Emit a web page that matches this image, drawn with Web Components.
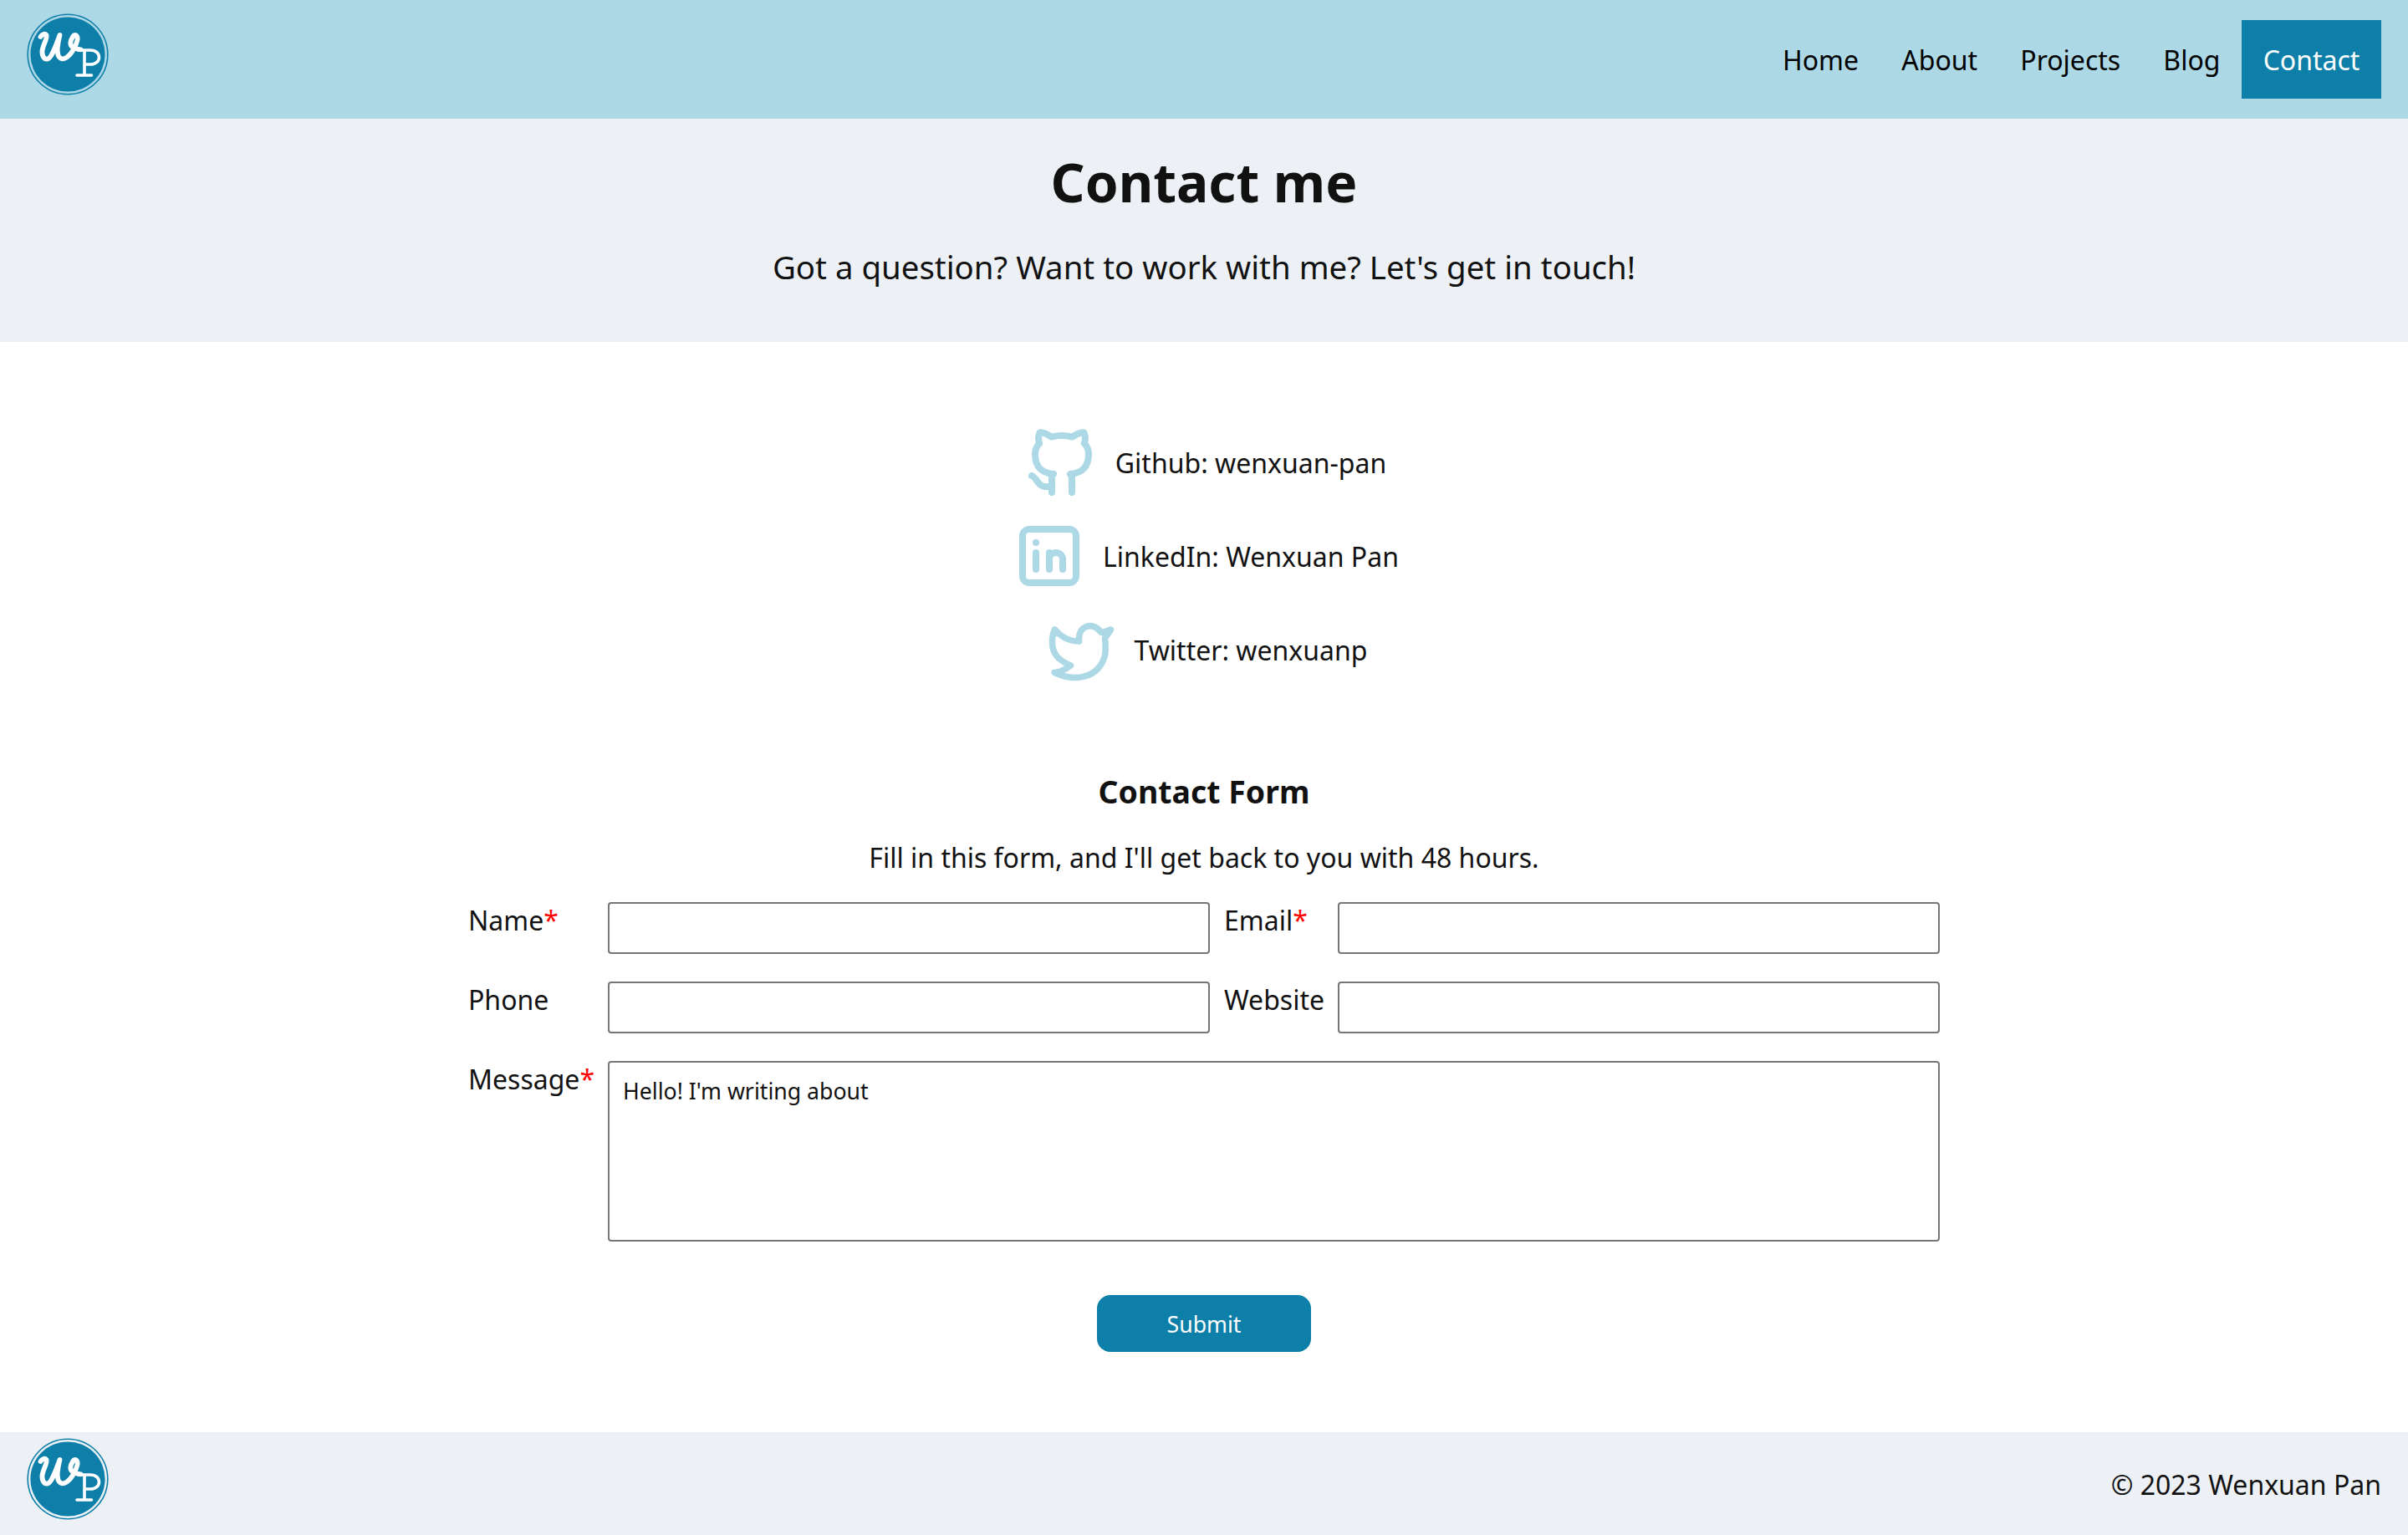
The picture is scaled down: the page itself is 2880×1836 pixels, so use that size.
<!doctype html>
<html lang="en">
<head>
<meta charset="utf-8">
<title>Contact me</title>
<style>
  html, body { margin: 0; padding: 0; background: #fff; }
  body {
    font-family: "Noto Sans", "Open Sans", sans-serif;
    color: #111;
    --accent: #0d7fa8;
    --light: #add8e6;
    --pale: #edf1f6;
  }
</style>
</head>
<body>
<site-header>
  <nav-link href="#home">Home</nav-link>
  <nav-link href="#about">About</nav-link>
  <nav-link href="#projects">Projects</nav-link>
  <nav-link href="#blog">Blog</nav-link>
  <nav-link href="#contact" active>Contact</nav-link>
</site-header>
<page-hero>
  <span slot="title">Contact me</span>
  Got a question? Want to work with me? Let's get in touch!
</page-hero>
<contact-links>
  <contact-link icon="github">Github: wenxuan-pan</contact-link>
  <contact-link icon="linkedin">LinkedIn: Wenxuan Pan</contact-link>
  <contact-link icon="twitter">Twitter: wenxuanp</contact-link>
</contact-links>
<contact-form></contact-form>
<site-footer>© 2023 Wenxuan Pan</site-footer>

<script>
// logo is stroked by hand, viewBox is the 102px box around the badge
class WpLogo extends HTMLElement {
  constructor() {
    super();
    this.attachShadow({ mode: "open" }).innerHTML = `
      <style>
        :host { display: block; width: 102px; height: 102px; }
        svg { display: block; }
      </style>
      <svg width="102" height="102" viewBox="0 0 102 102" fill="none" role="img" aria-label="WP logo">
        <circle cx="51" cy="51" r="47.8" stroke="#0d7fa8" stroke-width="1.6"/>
        <circle cx="51" cy="51" r="44.6" fill="#0d7fa8"/>
        <g stroke="#fff" stroke-linecap="round" stroke-linejoin="round">
          <path stroke-width="5.8" d="M18.500 30C20 27 24 25.500 25.500 28C27 32 21 40 20.500 47C20 53 23 57.500 27 56.500C32 55 37 40 41.500 28C39.500 36 37.500 46 39.500 52C41.500 57 46 57.500 50 54.500C56 50 61 41 62.500 34C63.500 28 59 26 57 30C54 35 52.500 40 58 43C60.500 44.200 63.500 45 66.500 45.300"/>
          <path stroke-width="3.600" d="M63.500 46H78C92 46 92 63 78 63H71M71 46V75.500M62 76H79.500"/>
        </g>
      </svg>`;
  }
}
customElements.define("wp-logo", WpLogo);

class NavLink extends HTMLElement {
  constructor() {
    super();
    this.attachShadow({ mode: "open" }).innerHTML = `
      <style>
        :host { display: block; font-size: 32px; line-height: 46px; }
        a { display: block; padding: 25px 25.6px 23px; color: #000; text-decoration: none; }
        :host([active]) a { background: var(--accent); color: #fff; }
      </style>
      <a part="link"><slot></slot></a>`;
  }
  connectedCallback() {
    this.shadowRoot.querySelector("a").href = this.getAttribute("href") || "#";
  }
}
customElements.define("nav-link", NavLink);

class SiteHeader extends HTMLElement {
  constructor() {
    super();
    this.attachShadow({ mode: "open" }).innerHTML = `
      <style>
        :host { display: flex; justify-content: space-between; align-items: center; height: 142px; padding: 0 32px 0 30px; background: var(--light); }
        wp-logo { align-self: flex-start; margin-top: 14px; }
        nav { display: flex; }
      </style>
      <wp-logo></wp-logo>
      <nav><slot></slot></nav>`;
  }
}
customElements.define("site-header", SiteHeader);

class PageHero extends HTMLElement {
  constructor() {
    super();
    this.attachShadow({ mode: "open" }).innerHTML = `
      <style>
        :host { display: block; padding: 28px 0 60px; background: var(--pale); text-align: center; }
        h1 { margin: 0 0 23px; font-size: 64px; line-height: 96px; font-weight: 700; }
        p { margin: 0; font-size: 38.4px; line-height: 60px; }
      </style>
      <h1><slot name="title"></slot></h1>
      <p><slot></slot></p>`;
  }
}
customElements.define("page-hero", PageHero);

const ICONS = {
  github: `<svg width="96" height="96" viewBox="0 0 24 24" stroke-width="2"><path d="M9 19c-4.300 1.400 -4.300 -2.500 -6 -3m12 5v-3.500c0 -1 .1 -1.400 -.5 -2c2.800 -.3 5.500 -1.400 5.500 -6a4.600 4.600 0 0 0 -1.300 -3.200a4.200 4.200 0 0 0 -.1 -3.200s-1.100 -.3 -3.500 1.300a12.300 12.300 0 0 0 -6.200 0c-2.400 -1.600 -3.500 -1.300 -3.500 -1.300a4.200 4.200 0 0 0 -.1 3.200a4.600 4.600 0 0 0 -1.300 3.200c0 4.600 2.700 5.700 5.500 6c-.6 .6 -.6 1.200 -.5 2v3.500"/></svg>`,
  linkedin: `<svg width="96" height="96" viewBox="0 0 24 24" stroke-width="2"><path d="M4 6a2 2 0 0 1 2 -2h12a2 2 0 0 1 2 2v12a2 2 0 0 1 -2 2h-12a2 2 0 0 1 -2 -2z"/><path d="M8 11v5"/><path d="M8 8v.01"/><path d="M12 16v-5"/><path d="M16 16v-3a2 2 0 0 0 -4 0"/></svg>`,
  twitter: `<svg width="96" height="96" viewBox="5 -6 96 96" stroke-width="7.500"><path d="M88.500 18C84 20 80.500 21 77 21.500C72 14 64 12 58 15C52 18 50 25 50.500 32C40 32 29 27 21.500 18C18 25 16 40 24 50C28 55 34 58 40.500 61C34 66 27 69 21 69.500C32 75 46 77 57 74C70 71 80 60 82 46C82.500 38 82 34 81.500 28C84 25 87 21 88.500 18Z"/></svg>`,
};

class ContactLink extends HTMLElement {
  constructor() {
    super();
    this.attachShadow({ mode: "open" }).innerHTML = `
      <style>
        :host { display: flex; justify-content: center; align-items: center; gap: 16px; height: 96px; font-size: 32px; line-height: 48px; }
        span { display: block; width: 96px; height: 96px; }
        svg { display: block; fill: none; stroke: var(--light); stroke-linecap: round; stroke-linejoin: round; }
        div { padding-top: 2px; }
      </style>
      <span></span>
      <div><slot></slot></div>`;
  }
  connectedCallback() {
    this.shadowRoot.querySelector("span").innerHTML = ICONS[this.getAttribute("icon")];
  }
}
customElements.define("contact-link", ContactLink);

class ContactLinks extends HTMLElement {
  constructor() {
    super();
    this.attachShadow({ mode: "open" }).innerHTML = `
      <style>
        :host { display: flex; flex-direction: column; gap: 16px; padding-top: 96px; }
      </style>
      <slot></slot>`;
  }
}
customElements.define("contact-links", ContactLinks);

class ContactForm extends HTMLElement {
  constructor() {
    super();
    this.attachShadow({ mode: "open" }).innerHTML = `
      <style>
        :host { display: block; width: 1760px; margin: 0 auto; padding: 92px 0 96px; }
        h2 { margin: 0 0 25px; font-size: 37.44px; line-height: 60px; font-weight: 700; text-align: center; }
        p { margin: 0 0 29px; font-size: 32px; line-height: 48px; text-align: center; }
        form { display: block; }
        .grid { display: grid; grid-template-columns: auto 1fr auto 1fr; gap: 33px 16px; }
        label { font-size: 32px; line-height: 44px; }
        label.mid { padding-left: 1px; }
        b { font-weight: 400; color: #f00; }
        input, textarea {
          box-sizing: border-box; width: 100%; margin: 0; padding: 2px 16px;
          border: 2px solid #767676; border-radius: 4px; background: #fff;
          font: 400 26.67px/40px "Noto Sans", sans-serif; color: #111; outline: none;
        }
        input { height: 62px; }
        textarea { grid-column: 2 / 5; height: 216px; padding: 14px 16px; resize: none; display: block; }
        .actions { display: flex; justify-content: center; margin-top: 64px; }
        button {
          width: 256px; height: 68px; border: 0; border-radius: 16px; padding: 0;
          background: var(--accent); color: #fff; font: 400 26.67px "Noto Sans", sans-serif;
        }
      </style>
      <h2>Contact Form</h2>
      <p>Fill in this form, and I'll get back to you with 48 hours.</p>
      <form>
        <div class="grid">
          <label for="name">Name<b>*</b></label><input id="name">
          <label class="mid" for="email">Email<b>*</b></label><input id="email">
          <label for="phone">Phone</label><input id="phone">
          <label class="mid" for="website">Website</label><input id="website">
          <label for="message">Message<b>*</b></label>
          <textarea id="message">Hello! I'm writing about</textarea>
        </div>
        <div class="actions"><button type="button">Submit</button></div>
      </form>`;
  }
}
customElements.define("contact-form", ContactForm);

class SiteFooter extends HTMLElement {
  constructor() {
    super();
    this.attachShadow({ mode: "open" }).innerHTML = `
      <style>
        :host { display: flex; justify-content: space-between; align-items: center; height: 123px; padding: 0 32px 0 30px; background: var(--pale); font-size: 32px; line-height: 48px; }
        wp-logo { align-self: flex-start; margin-top: 5px; }
        div { padding-top: 2px; }
      </style>
      <wp-logo></wp-logo>
      <div><slot></slot></div>`;
  }
}
customElements.define("site-footer", SiteFooter);
</script>
</body>
</html>
